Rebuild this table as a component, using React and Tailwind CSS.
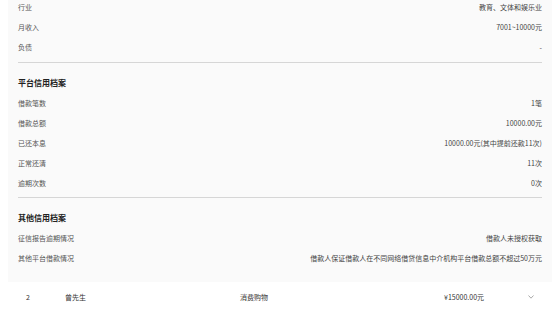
import React from "react";

const Row = ({ label, value }) => (
  <div className="flex h-[20px] items-center justify-between">
    <span className="text-[#555]">{label}</span>
    <span className="text-[#444]">{value}</span>
  </div>
);

const Heading = ({ children }) => (
  <div className="flex h-[20px] items-center text-[8px] font-bold text-[#222]">{children}</div>
);

export default function App() {
  return (
    <div
      className="h-[310px] w-[554px] overflow-hidden bg-white text-[7px]"
      style={{ fontFamily: '"Noto Sans CJK SC", "Noto Sans", sans-serif' }}
    >
      <div className="ml-[8px] mr-[2px] mt-[-3px] bg-[#fafafa] px-[10px] pb-[14px]">
        <Row label="行业" value="教育、文体和娱乐业" />
        <Row label="月收入" value="7001~10000元" />
        <Row label="负债" value="-" />
        <div className="mt-[5px] border-t border-[#d6d6d6]" />
        <div className="mt-[10px]">
          <Heading>平台信用档案</Heading>
        </div>
        <Row label="借款笔数" value="1笔" />
        <Row label="借款总额" value="10000.00元" />
        <Row label="已还本息" value="10000.00元(其中提前还款11次)" />
        <Row label="正常还清" value="11次" />
        <Row label="逾期次数" value="0次" />
        <div className="mt-[4px] border-t border-[#d6d6d6]" />
        <div className="mt-[10px]">
          <Heading>其他信用档案</Heading>
        </div>
        <Row label="征信报告逾期情况" value="借款人未授权获取" />
        <Row label="其他平台借款情况" value="借款人保证借款人在不同网络借贷信息中介机构平台借款总额不超过50万元" />
      </div>
      <div className="flex h-[30px] items-center text-[#333]">
        <span className="ml-[26px] w-[39px]">2</span>
        <span className="w-[175px]">曾先生</span>
        <span className="w-[204px]">消费购物</span>
        <span className="w-[82px]">¥15000.00元</span>
        <svg width="6" height="4" viewBox="0 0 6 4" className="ml-[2px]">
          <path d="M0.5 0.5 L3 3.2 L5.5 0.5" fill="none" stroke="#aaa" strokeWidth="1" />
        </svg>
      </div>
    </div>
  );
}
